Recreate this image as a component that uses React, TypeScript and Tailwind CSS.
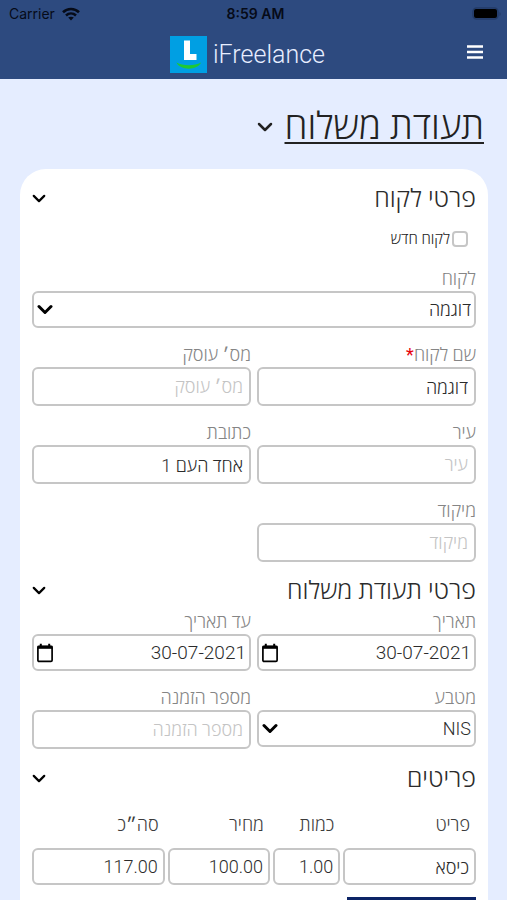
import { useId } from "react"
import type { ReactNode } from "react"
import clsx from "clsx"

const boxStyle = "w-full rounded-[6px] border-2 border-[#c6c6c6] bg-white font-light text-[#2b2b2b] outline-none placeholder:text-[#c4c4c4] placeholder:opacity-100"

function Chevron({ className }: { className?: string }) {
    return (
        <svg viewBox="0 0 16 10" className={className} fill="none" stroke="currentColor" strokeLinecap="round" strokeLinejoin="round" aria-hidden="true">
            <path d="M2 2l6 6 6-6" />
        </svg>
    )
}

function CalendarIcon() {
    return (
        <svg viewBox="0 0 18 20" className="h-5 w-[18px]" fill="none" stroke="currentColor" aria-hidden="true">
            <rect x="1.900" y="3.400" width="14.200" height="15" rx="1.200" strokeWidth="1.700" />
            <path d="M1.500 4.300h15" strokeWidth="3" />
            <path d="M4.800 .8V4M13.200 .8V4" strokeWidth="2" />
        </svg>
    )
}

function Logo() {
    return (
        <svg viewBox="0 0 37 37" className="size-[37px]" aria-hidden="true">
            <rect width="37" height="37" fill="#009fe3" />
            <path d="M14 4.500h6v13.500h6.500v6H14z" fill="#fff" />
            <path d="M6.500 26.500c6.500 3.700 18 3.700 24.500 0-3.500 8.200-21 8.200-24.500 0z" fill="#1fc934" />
        </svg>
    )
}

function StatusBar() {
    return (
        <div dir="ltr" className="grid h-7 grid-cols-3 items-center pl-[9px] pr-[5px] font-['Inter'] text-sm text-[#060b18]">
            <div className="flex items-center gap-[7px]">
                <span>Carrier</span>
                <svg viewBox="0 0 18 14" className="h-[14px] w-[18px]" fill="none" stroke="currentColor" strokeWidth="2.600" aria-hidden="true">
                    <path d="M1 5.200c4.500-4.300 11.500-4.300 16 0M4 8.500c2.900-2.600 7.100-2.600 10 0" />
                    <path d="M9 13.500l-2.800-2.900c1.600-1.300 4-1.300 5.600 0z" fill="currentColor" stroke="none" />
                </svg>
            </div>
            <span className="text-center font-semibold">8:59 AM</span>
            <svg viewBox="0 0 30 14" className="h-[14px] w-[30px] justify-self-end" aria-hidden="true">
                <rect x="1" y="1" width="25" height="11" rx="3.500" fill="none" stroke="#233b68" strokeWidth="1.500" />
                <rect x="2" y="2" width="23" height="9" rx="2" fill="#000" />
                <path d="M27.500 5v4c1.600-.6 1.600-3.400 0-4z" fill="#233b68" />
            </svg>
        </div>
    )
}

function Header() {
    return (
        <header className="shrink-0 bg-[#2d4a7f]">
            <StatusBar />
            <div dir="ltr" className="grid h-[51px] grid-cols-[1fr_auto_1fr] items-center pt-[2px] pl-3 pr-6">
                <a href="#" className="col-start-2 flex items-center gap-[6px] text-[25px] font-light text-[#e8eeff]">
                    <Logo />
                    iFreelance
                </a>
                <button type="button" aria-label="תפריט" className="justify-self-end pb-[6px] text-white">
                    <svg viewBox="0 0 16 16" className="size-4" fill="none" stroke="currentColor" strokeWidth="2.600" aria-hidden="true">
                        <path d="M0 2.500h16M0 8h16M0 13.500h16" />
                    </svg>
                </button>
            </div>
        </header>
    )
}

function SectionTitle({ children, className }: { children: ReactNode; className?: string }) {
    return (
        <button type="button" className={clsx("flex h-9 w-full items-center justify-between text-[#2b2b2b]", className)}>
            <h2 className="pt-[2px] text-[25px] leading-9 font-light">{children}</h2>
            <Chevron className="h-[9px] w-[14px] stroke-[2.5] text-black" />
        </button>
    )
}

type FieldProps = {
    label: string
    value?: string
    required?: boolean
    kind?: "text" | "date" | "select"
}

function Field({ label, value, required, kind = "text" }: FieldProps) {
    const id = useId()

    return (
        <div>
            <label htmlFor={id} className="block h-6 text-[18px] leading-6 font-light text-[#858585]">
                {label}
                {required && <span className="font-normal text-red-600">*</span>}
            </label>
            {kind === "text" && (
                <input id={id} type="text" defaultValue={value} placeholder={label} className={clsx(boxStyle, "block h-[39px] px-[6px] text-[18px]")} />
            )}
            {kind === "date" && (
                <div className="relative">
                    <input id={id} type="text" defaultValue={value} className={clsx(boxStyle, "block h-[37px] ps-[3px] pe-8 text-[19px]")} />
                    <button type="button" aria-label={label} className="absolute inset-y-0 left-1 flex items-center text-black">
                        <CalendarIcon />
                    </button>
                </div>
            )}
            {kind === "select" && (
                <div className="relative">
                    <select id={id} className={clsx(boxStyle, "block h-[37px] appearance-none ps-[3px] pe-8 text-[18px]")}>
                        <option>{value}</option>
                    </select>
                    <Chevron className="pointer-events-none absolute top-[13px] left-[5px] h-[11px] w-4 stroke-[3] text-black" />
                </div>
            )}
        </div>
    )
}

const columns = [
    { title: "פריט", value: "כיסא", width: "w-[30.5%]" },
    { title: "כמות", value: "1.00", width: "w-[15.5%]" },
    { title: "מחיר", value: "100.00", width: "w-[23.5%]" },
    { title: "סה״כ", value: "117.00", width: "w-[30.5%]" },
]

function ItemsTable() {
    return (
        <div className="-mx-[3px] mt-[17px]">
            <table className="w-full table-fixed border-separate border-spacing-x-[3px] border-spacing-y-0">
                <thead>
                    <tr>
                        {columns.map((col) => (
                            <th key={col.title} scope="col" className={clsx("h-[35px] px-[6px] pb-[11px] text-start text-[18px] leading-6 font-light text-[#3c3c3c]", col.width)}>
                                {col.title}
                            </th>
                        ))}
                    </tr>
                </thead>
                <tbody>
                    <tr>
                        {columns.map((col) => (
                            <td key={col.title} className="p-0">
                                <input type="text" aria-label={col.title} defaultValue={col.value} className={clsx(boxStyle, "block h-[37px] px-[5px] text-[18px]")} />
                            </td>
                        ))}
                    </tr>
                </tbody>
            </table>
        </div>
    )
}

export default function App() {
    return (
        <div dir="rtl" className="flex h-dvh flex-col bg-[#e5edff] font-['Roboto','Open_Sans','DejaVu_Sans',sans-serif]">
            <Header />

            <main className="flex-1 overflow-y-auto pr-[19px] pl-5 [scrollbar-width:none]">
                <button type="button" className="mt-6 mr-1 flex h-12 items-center gap-3 text-[#222222]">
                    <h1 className="text-[37px] leading-[48px] font-light underline decoration-2 underline-offset-[3px]">תעודת משלוח</h1>
                    <Chevron className="h-[10px] w-4 stroke-[2.5]" />
                </button>

                <form className="mt-[18px] rounded-t-[26px] bg-white px-3 pt-[11px] pb-6">
                    <SectionTitle>פרטי לקוח</SectionTitle>
                    <label className="mt-[11px] mr-2 flex h-6 w-fit items-center gap-[2px] text-[15px] font-light text-[#222222]">
                        <input type="checkbox" className="size-4 appearance-none rounded-[4px] border-2 border-[#c6c6c6] bg-white" />
                        לקוח חדש
                    </label>

                    <div className="mt-4 grid grid-cols-2 gap-x-[6px] gap-y-[15px]">
                        <div className="col-span-2">
                            <Field label="לקוח" value="דוגמה" kind="select" />
                        </div>
                        <Field label="שם לקוח" value="דוגמה" required />
                        <Field label="מס׳ עוסק" />
                        <Field label="עיר" />
                        <Field label="כתובת" value="אחד העם 1" />
                        <Field label="מיקוד" />
                    </div>

                    <SectionTitle className="mt-[10px]">פרטי תעודת משלוח</SectionTitle>
                    <div className="mt-[2px] grid grid-cols-2 gap-x-[6px] gap-y-[15px]">
                        <Field label="תאריך" value="30-07-2021" kind="date" />
                        <Field label="עד תאריך" value="30-07-2021" kind="date" />
                        <Field label="מטבע" value="NIS" kind="select" />
                        <Field label="מספר הזמנה" />
                    </div>

                    <SectionTitle className="mt-[11px]">פריטים</SectionTitle>
                    <ItemsTable />

                    <button type="button" aria-label="הוספת פריט" className="mt-3 block h-10 w-[29%] bg-[#0c2466]" />
                </form>
            </main>
        </div>
    )
}
